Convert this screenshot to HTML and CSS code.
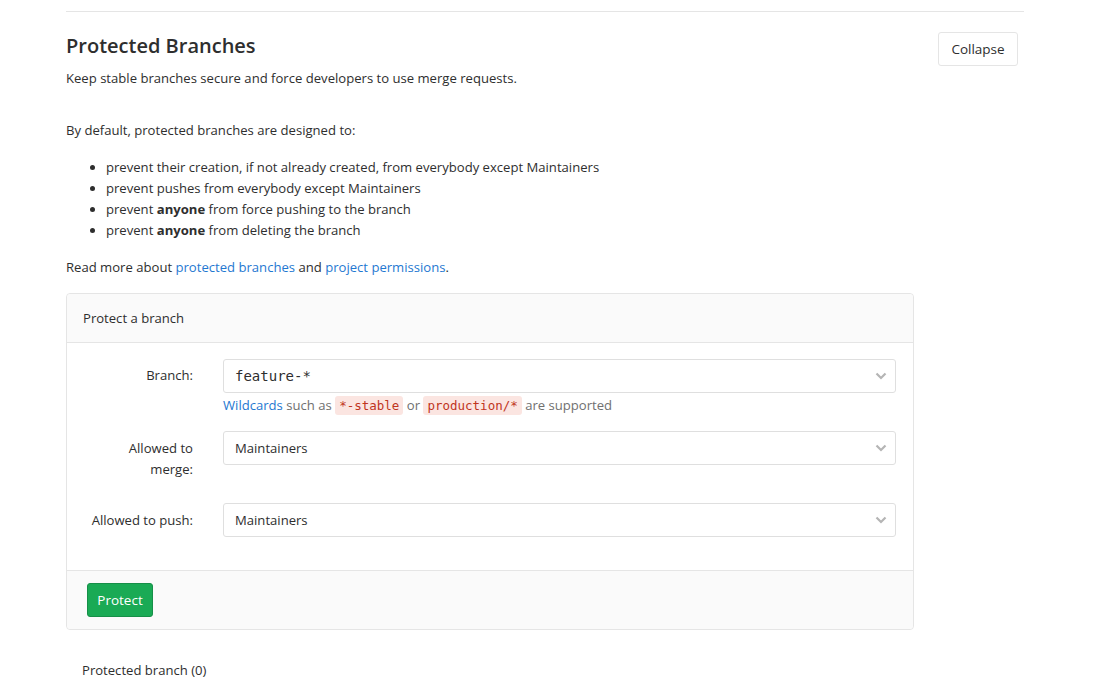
FILE: index.html
```html
<!DOCTYPE html>
<html>
<head>
<meta charset="utf-8">
<link rel="stylesheet" href="styles.css">
</head>
<body>
<section class="settings">
  <div class="settings-header">
    <div class="settings-intro">
      <h4 class="settings-title">Protected Branches</h4>
      <p class="settings-desc">Keep stable branches secure and force developers to use merge requests.</p>
    </div>
    <button class="btn-default">Collapse</button>
  </div>
  <div class="settings-content">
    <p class="lead-p">By default, protected branches are designed to:</p>
    <ul class="rules">
      <li>prevent their creation, if not already created, from everybody except Maintainers</li>
      <li>prevent pushes from everybody except Maintainers</li>
      <li>prevent <strong>anyone</strong> from force pushing to the branch</li>
      <li>prevent <strong>anyone</strong> from deleting the branch</li>
    </ul>
    <p class="read-more">Read more about <a href="#">protected branches</a> and <a href="#">project permissions</a>.</p>

    <div class="card">
      <div class="card-header">Protect a branch</div>
      <div class="card-body">
        <div class="form-row row-branch">
          <label class="form-label">Branch:</label>
          <div class="form-field">
            <div class="select">
              <span class="select-value mono">feature-*</span>
              <svg class="chev" width="12" height="8" viewBox="0 0 12 8"><path d="M1.5 1.5 L6 6 L10.5 1.5" fill="none" stroke="#b5b5b5" stroke-width="2.2"/></svg>
            </div>
            <div class="help"><a href="#">Wildcards</a> such as <code>*-stable</code> or <code>production/*</code> are supported</div>
          </div>
        </div>
        <div class="form-row row-merge">
          <label class="form-label">Allowed to merge:</label>
          <div class="form-field">
            <div class="select">
              <span class="select-value">Maintainers</span>
              <svg class="chev" width="12" height="8" viewBox="0 0 12 8"><path d="M1.5 1.5 L6 6 L10.5 1.5" fill="none" stroke="#b5b5b5" stroke-width="2.2"/></svg>
            </div>
          </div>
        </div>
        <div class="form-row row-push">
          <label class="form-label">Allowed to push:</label>
          <div class="form-field">
            <div class="select">
              <span class="select-value">Maintainers</span>
              <svg class="chev" width="12" height="8" viewBox="0 0 12 8"><path d="M1.5 1.5 L6 6 L10.5 1.5" fill="none" stroke="#b5b5b5" stroke-width="2.2"/></svg>
            </div>
          </div>
        </div>
      </div>
      <div class="card-footer">
        <button class="btn-success">Protect</button>
      </div>
    </div>

    <div class="list-title">Protected branch (0)</div>
  </div>
</section>
</body>
</html>
```

FILE: styles.css
```css
* { box-sizing: border-box; }
html, body { margin: 0; padding: 0; background: #fff; }
body {
  font-family: "Open Sans", "Noto Sans", sans-serif;
  font-size: 13.1px;
  color: #2e2e2e;
  line-height: 21px;
}
.settings {
  margin-left: 66px;
  width: 958px;
  padding-top: 11px;
}
.settings-header {
  border-top: 1px solid #e5e5e5;
  display: flex;
  justify-content: space-between;
  align-items: flex-start;
  padding-top: 20px;
}
.settings-title {
  margin: 0;
  font-size: 20px;
  font-weight: 600;
  line-height: 28px;
  color: #2e2e2e;
}
.settings-desc { margin: 8px 0 0; }
.btn-default {
  margin-right: 6px;
  font-family: inherit;
  font-size: 13.5px;
  color: #2e2e2e;
  background: #fff;
  border: 1px solid #e5e5e5;
  border-radius: 3px;
  height: 34px;
  width: 80px;
  padding: 0;
}
.settings-content { padding-top: 31px; }
.lead-p { margin: 0 0 16px; }
.rules { margin: 0 0 16px; padding-left: 40px; }
.rules li { line-height: 21px; }
.rules strong { font-weight: 700; }
.read-more { margin: 0 0 15px; }
a { color: #1f78d1; text-decoration: none; }

.card {
  width: 848px;
  border: 1px solid #e5e5e5;
  border-radius: 4px;
  background: #fff;
}
.card-header {
  background: #fafafa;
  border-bottom: 1px solid #e5e5e5;
  height: 49px;
  padding: 0 16px;
  display: flex;
  align-items: center;
  border-radius: 4px 4px 0 0;
}
.card-body { padding: 16px 17px 16px 16px; }
.form-row {
  display: grid;
  grid-template-columns: 140px 1fr;
}
.row-branch { margin-bottom: 15px; }
.row-merge { margin-bottom: 23px; }
.row-push { margin-bottom: 17px; }
.form-label {
  text-align: right;
  padding: 7px 30px 0 4px;
  line-height: 21px;
}
.row-branch .form-label { padding-top: 6px; }
.select {
  height: 34px;
  border: 1px solid #dfdfdf;
  border-radius: 3px;
  display: flex;
  align-items: center;
  justify-content: space-between;
  padding: 0 8px 0 11px;
}
.mono { font-family: "DejaVu Sans Mono", monospace; font-size: 14px; }
.help {
  color: #707070;
  margin-top: 2px;
  line-height: 21px;
}
code {
  font-family: "DejaVu Sans Mono", monospace;
  font-size: 12.5px;
  color: #c0341d;
  background: #fbe5e1;
  padding: 2px 4px;
  border-radius: 3px;
}
.card-footer {
  background: #fafafa;
  border-top: 1px solid #e5e5e5;
  padding: 12px 20px 12px 20px;
  border-radius: 0 0 4px 4px;
}
.btn-success {
  font-family: inherit;
  font-size: 13.5px;
  color: #fff;
  background: #1aaa55;
  border: 1px solid #168f48;
  border-radius: 3px;
  height: 34px;
  width: 66px;
  padding: 0;
}
.list-title {
  margin-top: 30px;
  padding-left: 16px;
}
```
